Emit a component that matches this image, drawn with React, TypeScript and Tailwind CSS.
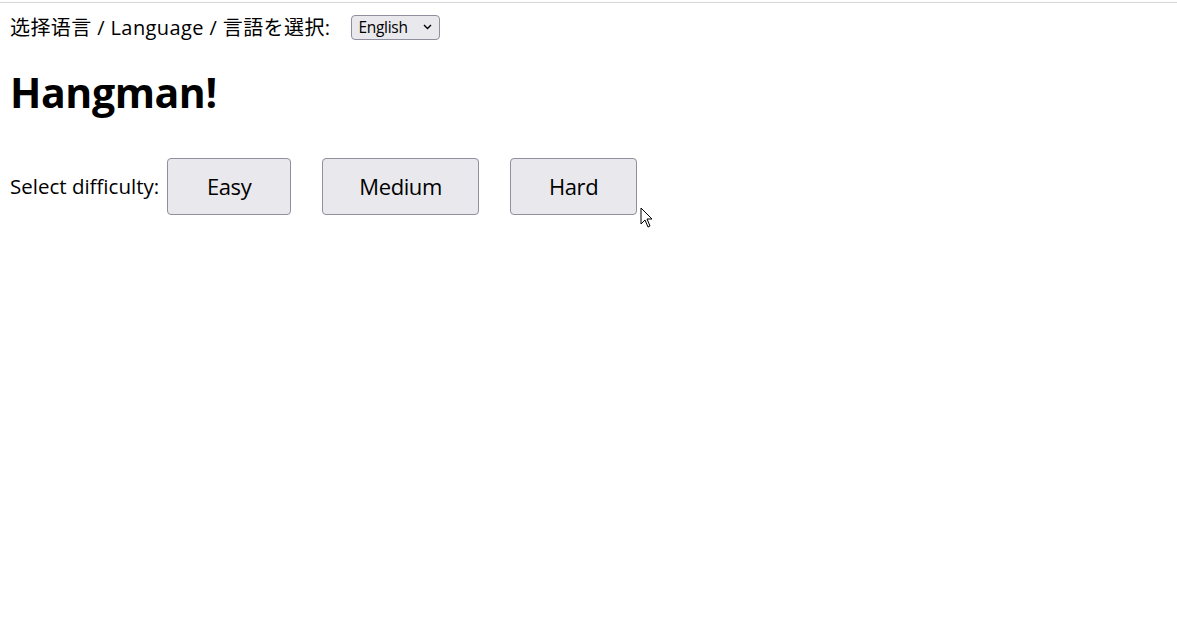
import React, { useState } from "react";

const font = { fontFamily: '"Open Sans", "Noto Sans CJK JP", sans-serif' };

const App = () => {
    const [lang, setLang] = useState("en");
    const levels = ["Easy", "Medium", "Hard"];

    return (
        <div className="relative min-h-[619px] bg-white text-black" style={font}>
            <div className="h-[3px] border-b border-[#d6d6d6]"></div>

            <div className="px-[10px]">
                <div className="flex items-center h-[46px] pt-[3px] text-[20px] tracking-[0.4px]">
                    <span>选择语言 / Language / 言語を選択:</span>
                    <div className="relative ml-[21px]">
                        <select
                            value={lang}
                            onChange={(e) => setLang(e.target.value)}
                            className="appearance-none block h-[25px] w-[89px] pl-[6px] text-[15.5px] tracking-[-0.3px] bg-[#e9e9ed] border border-[#8f8f9d] rounded-[4px]"
                        >
                            <option value="en">English</option>
                            <option value="zh">中文</option>
                            <option value="ja">日本語</option>
                        </select>
                        <svg className="absolute right-[8px] top-[9px] pointer-events-none" width="9" height="6" viewBox="0 0 9 6">
                            <path d="M1 1 L4.5 4.5 L8 1" fill="none" stroke="black" strokeWidth="1.4" />
                        </svg>
                    </div>
                </div>

                <h1 className="mt-[19px] text-[41px] leading-[48px] font-bold tracking-[-0.4px]">Hangman!</h1>

                <div className="mt-[42px] flex items-center text-[20.5px]">
                    <span className="mr-[8px]">Select difficulty:</span>
                    <div className="flex gap-[31px]">
                        {levels.map((level) => (
                            <button
                                key={level}
                                className={
                                    "h-[57px] text-[22px] tracking-[-0.4px] bg-[#e9e9ed] border border-[#8f8f9d] rounded-[4px] " +
                                    (level === "Easy" ? "w-[124px]" : level === "Medium" ? "w-[157px]" : "w-[127px]")
                                }
                            >
                                {level}
                            </button>
                        ))}
                    </div>
                </div>
            </div>

            <svg className="absolute left-[640px] top-[207px]" width="14" height="22" viewBox="0 0 14 22">
                <path d="M1 1 L1 17 L5 13 L8 20 L10 19 L7 12 L12 12 Z" fill="white" stroke="black" strokeWidth="1" />
            </svg>
        </div>
    );
};

export default App;
